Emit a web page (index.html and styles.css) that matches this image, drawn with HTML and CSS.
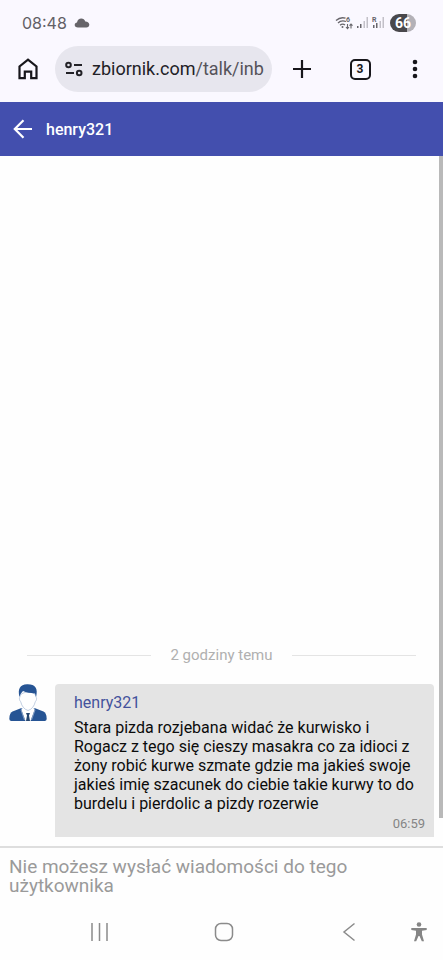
FILE: index.html
```html
<!DOCTYPE html>
<html lang="pl">
<head>
<meta charset="utf-8">
<meta name="viewport" content="width=device-width, initial-scale=1">
<title>henry321</title>
<link rel="stylesheet" href="styles.css">
</head>
<body>
<div class="status">
  <span class="clock">08:48</span>
  <svg class="cloud" width="16" height="10" viewBox="0 0 16 10"><path d="M4 9.500C1.800 9.500.7 8.500.7 7c0-1.400 1-2.300 2.300-2.400C3.400 2 5.200.6 7.300.6c1.900 0 3.400 1.100 4 2.800 2.500 0 4 1.300 4 3.200 0 1.800-1.200 2.900-3 2.900z" fill="#666469"/></svg>
  <div class="signals">
    <svg width="19" height="16" viewBox="0 0 19 16" fill="none" stroke="#67656b" stroke-width="1.300">
      <path d="M1 5.500C4 2.800 7.500 2.300 10.500 3.200M3 8C5 6 8 5.500 11 6.500M5 10.300c1.600-1.400 3.500-1.500 5-.4"/>
      <circle cx="7.500" cy="12" r="1" fill="#67656b" stroke="none"/>
      <path d="M12.500 9v4.500M11 12l1.500 1.700L14 12M16 13.500V9M14.500 10.700L16 9l1.500 1.700" stroke-width="1.100"/>
      <text class="tiny" x="11" y="7">6</text>
    </svg>
    <svg width="13" height="16" viewBox="0 0 13 16">
      <path d="M1 11h1.500v2H1zM4 9h1.500v4H4z" fill="#67656b"/><path d="M7.500 6H9v7H7.500zM10.500 2H12v11h-1.500z" fill="#c2c0c8"/>
    </svg>
    <svg width="14" height="16" viewBox="0 0 14 16">
      <text class="tiny" x="1" y="7">R</text>
      <path d="M2 10h1.500v3H2zM5 8h1.500v5H5z" fill="#67656b"/><path d="M8.500 6H10v7H8.500zM11.500 2H13v11h-1.500z" fill="#c2c0c8"/>
    </svg>
    <span class="battery">66</span>
  </div>
</div>
<div class="toolbar">
  <button class="tool home" aria-label="Strona główna"><svg width="20" height="22" viewBox="0 0 20 22" fill="none" stroke="#17161b" stroke-width="2.200"><path d="M1.500 20.200V8.500L10 1.700l8.500 6.800v11.700h-5.300v-6.500H6.800v6.500z"/></svg></button>
  <div class="address">
    <svg width="18" height="16" viewBox="0 0 18 16" fill="none" stroke="#222126" stroke-width="2"><circle cx="3.500" cy="4" r="2.300"/><path d="M9 4h8M1 12h8"/><circle cx="14.200" cy="12" r="2.300"/></svg>
    <a class="url" href="#">zbiornik.com<span>/talk/inb</span></a>
  </div>
  <button class="tool plus" aria-label="Nowa karta"><svg width="20" height="20" viewBox="0 0 20 20"><path d="M10 1v18M1 10h18" stroke="#17161b" stroke-width="2.200"/></svg></button>
  <button class="tool tabs" aria-label="Karty"><span>3</span></button>
  <button class="tool more" aria-label="Menu"><svg width="6" height="20" viewBox="0 0 6 20" fill="#17161b"><circle cx="3" cy="3" r="2.300"/><circle cx="3" cy="10" r="2.300"/><circle cx="3" cy="17" r="2.300"/></svg></button>
</div>
<header class="header">
  <button class="tool" aria-label="Wstecz"><svg width="20" height="20" viewBox="0 0 20 20" fill="none" stroke="#fff" stroke-width="2.200"><path d="M19 10H2M10.500 1.300L1.800 10l8.700 8.700"/></svg></button>
  <h1>henry321</h1>
</header>
<main class="chat">
  <div class="messages">
    <div class="divider"><span>2 godziny temu</span></div>
    <article class="message">
      <svg class="avatar" width="38" height="38" viewBox="0 0 38 38">
        <path d="M12.500 24L3.500 27.500Q.3 29 .3 35q.2 2 2 2h33.400q1.800 0 2-2Q37.700 29 34.500 27.500L25.500 24z" fill="#265494"/>
        <path d="M13 23l-.5 3 4 11h5l4-11-.5-3z" fill="#fff"/>
        <path d="M13.500 24l-1.500 2 3.500 10M24.500 24l1.500 2-3.500 10" fill="none" stroke="#a8bad5" stroke-width=".7"/>
        <path d="M11.300 11c0 3-1.300 2-.8 4.500.3 1.500 1 1.500 1.300 2.500.9 4 3.500 7.500 7.200 8.500 3.700-1 6.300-4.500 7.200-8.500.3-1 1-1 1.300-2.500.5-2.500-.8-1.500-.8-4.500-4-4-11-4-15.400 0z" fill="#fff" stroke="#a8bad5" stroke-width=".7"/>
        <path d="M10.500 13C8.500 5 11 .5 18 .3c8-.3 11.500 4 9 12.700L26 9.500C21.500 9 17 8.500 14 7c-1.500 1.500-2.700 3-3.500 6z" fill="#265494"/>
        <path d="M17 29h4l-1 2.500 1 5.500h-4l1-5.500z" fill="#24456f"/>
      </svg>
      <div class="bubble">
        <a class="author" href="#">henry321</a>
        <p>Stara pizda rozjebana widać że kurwisko i Rogacz z tego się cieszy masakra co za idioci z żony robić kurwe szmate gdzie ma jakieś swoje jakieś imię szacunek do ciebie takie kurwy to do burdelu i pierdolic a pizdy rozerwie</p>
        <time>06:59</time>
      </div>
    </article>
  </div>
  <div class="track"><div class="thumb"></div></div>
</main>
<footer class="composer">
  <textarea rows="2" disabled aria-label="Wiadomość" placeholder="Nie możesz wysłać wiadomości do tego użytkownika"></textarea>
</footer>
<nav class="nav">
  <button class="tool" aria-label="Ostatnie"><svg width="20" height="20" viewBox="0 0 20 20"><path d="M2 1v18M9.500 1v18M17 1v18" stroke="#8b8b8b" stroke-width="1.500"/></svg></button>
  <button class="tool" aria-label="Ekran główny"><svg width="20" height="20" viewBox="0 0 20 20"><rect x="1.500" y="1.500" width="17" height="17" rx="5.500" fill="none" stroke="#8b8b8b" stroke-width="1.500"/></svg></button>
  <button class="tool" aria-label="Cofnij"><svg width="20" height="20" viewBox="0 0 20 20"><path d="M15.500 1.500L5 10l10.500 8.500" fill="none" stroke="#8b8b8b" stroke-width="1.500"/></svg></button>
  <button class="tool access" aria-label="Ułatwienia dostępu"><svg width="16" height="20" viewBox="0 0 16 20" fill="#858585"><circle cx="8" cy="2.500" r="2.300"/><path d="M.3 6h15.400v2L11 8.800v3.700l2 6.800h-2.200L8.500 14h-1l-2.300 5.300H3l2-6.800V8.800L.3 8z"/></svg></button>
</nav>
</body>
</html>
```
FILE: styles.css
```css
* {
  box-sizing: border-box;
}

body {
  margin: 0;
  min-height: 100vh;
  display: flex;
  flex-direction: column;
  background: #fefefe;
  font-family: Roboto, "Noto Sans", sans-serif;
  font-size: 16px;
  line-height: 19px;
  color: #0c0c0c;
}

svg {
  display: block;
  flex: none;
}

.tool {
  display: flex;
  align-items: center;
  justify-content: center;
  flex: none;
  padding: 0;
  border: 0;
  background: none;
  font: inherit;
}

.status {
  display: flex;
  align-items: center;
  gap: 7px;
  height: 46px;
  padding: 0 27px 0 22px;
  background: #faf8ff;
}

.clock {
  font-family: Inter, Roboto, sans-serif;
  color: #626066;
}

.signals {
  display: flex;
  align-items: center;
  gap: 2px;
  margin-left: auto;
}

.tiny {
  font: 700 7px Roboto, sans-serif;
  fill: #67656b;
  stroke: none;
}

.battery {
  width: 26px;
  margin-left: 3px;
  border-radius: 9px;
  background: linear-gradient(90deg, #49484c 66%, #b3b1b7 66%);
  color: #fff;
  font-size: 14px;
  font-weight: 700;
  line-height: 18px;
  text-align: center;
}

.toolbar {
  display: flex;
  align-items: center;
  height: 56px;
  padding: 0 12px 10px 16px;
  background: #faf8ff;
}

.home {
  width: 24px;
}

.address {
  display: flex;
  align-items: center;
  flex: 1;
  gap: 9px;
  min-width: 0;
  height: 46px;
  margin-left: 15px;
  padding: 0 4px 0 10px;
  border-radius: 23px;
  background: #e7e6ee;
}

.url {
  flex: 1;
  min-width: 0;
  overflow: hidden;
  white-space: nowrap;
  color: #222126;
  font-size: 18px;
  line-height: 26px;
  text-decoration: none;
}

.url span {
  color: #55535a;
}

.plus {
  width: 60px;
}

.tabs {
  width: 56px;
}

.tabs span {
  width: 21px;
  border: 2px solid #17161b;
  border-radius: 5px;
  color: #17161b;
  font-size: 12px;
  font-weight: 700;
  line-height: 17px;
}

.more {
  width: 32px;
  margin-left: 11px;
}

.header {
  display: flex;
  align-items: center;
  gap: 13px;
  height: 54px;
  padding: 0 13px;
  background: #434fae;
  color: #fff;
}

.header h1 {
  margin: 0;
  font-size: 16px;
  font-weight: 500;
}

.chat {
  display: flex;
  flex: 1;
}

.messages {
  display: flex;
  flex: 1;
  flex-direction: column;
  justify-content: flex-end;
  padding: 0 5px 9px 9px;
}

.track {
  width: 4px;
}

.thumb {
  height: 96%;
  background: #b9b9b9;
}

.divider {
  display: flex;
  align-items: center;
  gap: 19px;
  margin: 0 18px 19px;
  color: #b0b0b0;
  font-size: 15px;
}

.divider::before,
.divider::after {
  content: "";
  flex: 1;
  height: 1px;
  background: #e4e4e4;
}

.message {
  display: flex;
  gap: 8px;
}

.bubble {
  display: flex;
  flex: 1;
  flex-direction: column;
  padding: 9px 9px 4px 19px;
  border-radius: 4px 4px 0 0;
  background: #e4e4e4;
}

.author {
  color: #43529c;
  text-decoration: none;
}

.bubble p {
  margin: 6px 0 1px;
}

.bubble time {
  align-self: flex-end;
  color: #858585;
  font-size: 13px;
}

.composer {
  padding: 9px 9px 5px;
  border-top: 2px solid #dedede;
}

.composer textarea {
  display: block;
  width: 100%;
  padding: 0 0 4px;
  border: 0;
  background: none;
  font: inherit;
  font-size: 19px;
  resize: none;
  overflow: hidden;
}

.composer textarea::placeholder {
  color: #9a9a9a;
}

.nav {
  display: grid;
  grid-template-columns: 1fr 1fr 1fr;
  align-items: center;
  position: relative;
  height: 56px;
  padding: 0 32px 0 38px;
}

.access {
  position: absolute;
  right: 16px;
}
```
